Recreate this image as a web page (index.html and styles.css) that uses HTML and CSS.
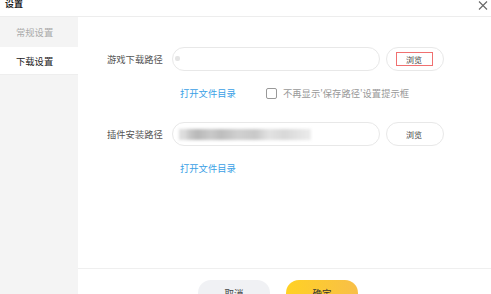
FILE: index.html
```html
<!DOCTYPE html>
<html lang="zh-CN">
<head>
<meta charset="utf-8">
<title>设置</title>
<link rel="stylesheet" href="styles.css">
</head>
<body>
<div class="dialog">
  <div class="header">
    <div class="title">设置</div>
    <svg class="close" width="10" height="9" viewBox="0 0 10 9"><path d="M1 0.5 L9 8.5 M9 0.5 L1 8.5" stroke="#666" stroke-width="1.1" fill="none"/></svg>
  </div>
  <div class="body">
    <div class="sidebar">
      <div class="nav-item">常规设置</div>
      <div class="nav-item active">下载设置</div>
    </div>
    <div class="content">
      <div class="main">
        <div class="row">
          <div class="label">游戏下载路径</div>
          <div class="input"><span class="dot"></span></div>
          <div class="btn-browse"><span class="mark">浏览</span></div>
        </div>
        <div class="sub">
          <a class="link">打开文件目录</a>
          <span class="check"></span>
          <span class="check-text">不再显示'保存路径'设置提示框</span>
        </div>
        <div class="row row2">
          <div class="label">插件安装路径</div>
          <div class="input"><span class="blur"></span></div>
          <div class="btn-browse"><span class="plain">浏览</span></div>
        </div>
        <div class="sub">
          <a class="link">打开文件目录</a>
        </div>
      </div>
      <div class="footer">
        <div class="btn cancel">取消</div>
        <div class="btn ok">确定</div>
      </div>
    </div>
  </div>
</div>
</body>
</html>
```
FILE: styles.css
```css
* { box-sizing: border-box; }
html, body { margin: 0; padding: 0; }
body {
  width: 491px; height: 294px; overflow: hidden; background: #fff;
  font-family: "Noto Sans CJK SC", "Noto Sans", sans-serif;
}
.dialog { width: 491px; height: 294px; display: flex; flex-direction: column; }
.header {
  height: 17px; border-bottom: 1px solid #ededed;
  display: flex; justify-content: space-between; align-items: flex-start;
  padding: 0 3px 0 5px;
}
.title { font-size: 9px; font-weight: bold; line-height: 9px; color: #222; margin-top: -1px; }
.close { margin-top: 0.5px; }
.body { flex: 1; display: flex; min-height: 0; }
.sidebar { width: 78px; background: #f4f4f4; padding-top: 0; }
.nav-item {
  height: 30px; line-height: 30px; padding-left: 16px;
  font-size: 9.3px; color: #aaa;
}
.nav-item.active { background: #fff; color: #222; height: 28px; line-height: 28px; border-bottom: 1px solid #eee; }
.content { flex: 1; display: flex; flex-direction: column; }
.main { flex: 1; padding: 30px 0 0 29px; }
.row { display: flex; align-items: center; height: 24px; }
.row2 { margin-top: 21px; }
.label { width: 65px; font-size: 9.3px; color: #555; }
.input {
  width: 208px; height: 24px; border: 1px solid #e8e8e8; border-radius: 12px;
  position: relative; overflow: hidden;
}
.dot {
  position: absolute; left: 2px; top: 8px; width: 5px; height: 5px;
  background: #e4e4e4; border-radius: 2px;
}
.blur {
  position: absolute; left: 6px; top: 6px; width: 132px; height: 11px;
  background: linear-gradient(90deg, #ddd 0 4%, #c8c8c8 8%, #b8b8b8 14%, #c9c9c9 24%, #bdbdbd 32%, #d0d0d0 45%, #c8c8c8 58%, #e2e2e2 68%, #d8d8d8 80%, #ececec 100%);
  filter: blur(1.5px);
}
.btn-browse {
  width: 58px; height: 24px; margin-left: 6px; border: 1px solid #e8e8e8; border-radius: 12px;
  display: flex; align-items: center; justify-content: center;
  font-size: 8px; color: #444;
}
.mark {
  width: 37px; height: 14px; border: 1px solid #f07070;
  display: flex; align-items: center; justify-content: center; margin-right: 2px;
}
.plain { margin-right: 2px; }
.sub { display: flex; align-items: center; height: 16px; margin-top: 14px; padding-left: 73px; }
.link { font-size: 9.3px; color: #3a9fe6; width: 86px; }
.check {
  width: 11px; height: 11px; border: 1px solid #999; border-radius: 2px; margin-right: 6px;
}
.check-text { font-size: 9.3px; color: #999; }
.footer {
  height: 26px; border-top: 1px solid #efefef; display: flex; gap: 16px;
  padding: 11px 0 0 120px;
}
.btn {
  width: 72px; height: 26px; border-radius: 13px; flex: none;
  display: flex; align-items: center; justify-content: center;
  font-size: 9.5px; color: #444;
}
.cancel { background: #f0f1f4; }
.ok { background: linear-gradient(90deg, #ffd124, #f8bf48); color: #333; }
```
